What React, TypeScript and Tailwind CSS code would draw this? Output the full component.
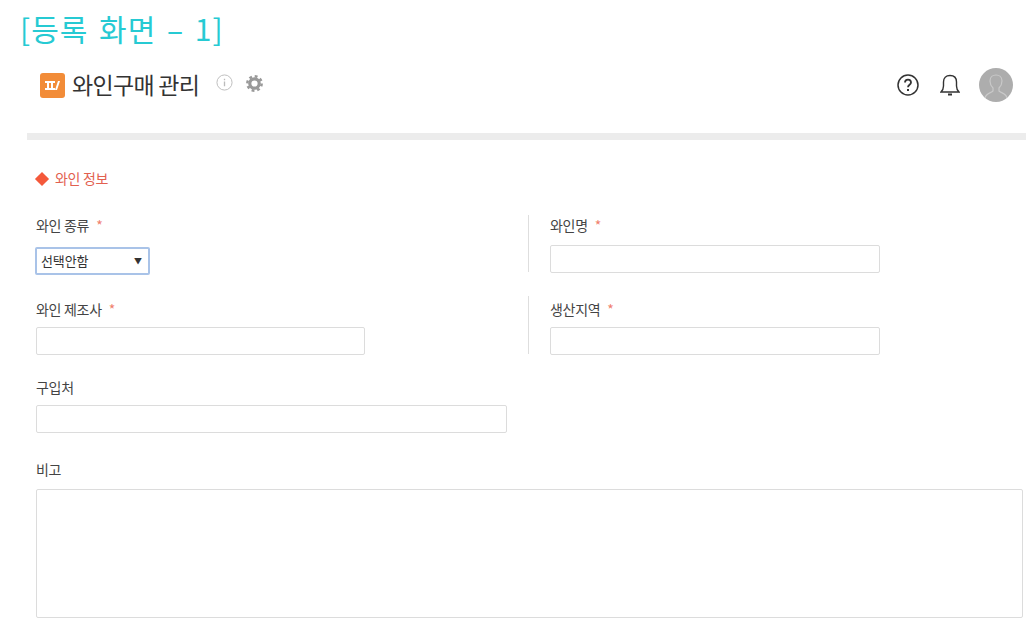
const font = { fontFamily: '"Noto Sans CJK KR", "Noto Sans", sans-serif' };

function Label({ text, required }: { text: string; required?: boolean }) {
  return (
    <div className="h-[20px] text-[14px] leading-[18px] tracking-[-0.3px] text-[#444]">
      {text}
      {required && <span className="ml-[7px] text-[#f0806c]">*</span>}
    </div>
  );
}

function Input({ width }: { width: string }) {
  return <input className={`block h-[28px] rounded-[2px] border border-[#dcdcdc] bg-white ${width}`} />;
}

export default function App() {
  return (
    <div className="h-[624px] w-[1026px] overflow-hidden bg-white" style={font}>
      <div className="h-[47px] pl-[20px] pt-[8px] text-[30px] leading-[40px] font-normal tracking-[1px] [word-spacing:3px] text-[#26cad3]">
        [등록 화면 – 1]
      </div>

      <div className="flex h-[86px] items-start justify-between pl-[40px] pr-[13px]">
        <div className="flex items-center pt-[23px]">
          <div className="flex h-[25px] w-[25px] items-center justify-center rounded-[3px] bg-[#f28c38]">
            <svg width="15" height="9" viewBox="0 0 15 9" fill="#fff">
              <path d="M0 0h10v2H8v5h2v2H0V7h2V2H0zM4 2v5h2V2z" />
              <path d="M13 0h2l-3 9h-2z" />
            </svg>
          </div>
          <div className="ml-[7px] pb-[2px] text-[23px] leading-[28px] tracking-[-0.7px] text-[#333]">와인구매 관리</div>
          <svg className="ml-[17px] -mt-[5px]" width="17" height="17" viewBox="0 0 18 18" fill="none" stroke="#bbb">
            <circle cx="9" cy="9" r="8" />
            <path d="M9 8v5M9 5v1.6" strokeWidth="1.4" />
          </svg>
          <svg className="ml-[13px] -mt-[3px]" width="17" height="17" viewBox="0 0 18 18" fill="none" stroke="#999">
            <circle cx="9" cy="9" r="5" strokeWidth="3.4" />
            <circle cx="9" cy="9" r="7.6" strokeWidth="2.6" strokeDasharray="3 2.97" />
          </svg>
        </div>
        <div className="flex items-center pt-[21px]">
          <svg width="22" height="22" viewBox="0 0 22 22" fill="none" stroke="#333" strokeWidth="1.5">
            <circle cx="11" cy="11" r="10" />
            <path d="M8 8.600c0-4 6-4 6 0 0 2.200-3 2.200-3 4.600" strokeWidth="1.8" />
            <path d="M11 15v2" strokeWidth="2" />
          </svg>
          <svg className="ml-[21px]" width="20" height="24" viewBox="0 0 20 24" fill="none" stroke="#333" strokeWidth="1.4">
            <path d="M1 19c2-2 2.500-3 2.500-6V9c0-4 2.500-6.500 6.500-6.500S16.500 5 16.500 9v4c0 3 .5 4 2.500 6z" />
            <path d="M8 21.500h4" strokeWidth="2" />
          </svg>
          <div className="ml-[19px] flex h-[34px] w-[34px] items-center justify-center overflow-hidden rounded-full bg-[#adadad]">
            <svg width="34" height="34" viewBox="0 0 34 34" fill="none" stroke="#c9c9c9" strokeWidth="1.2">
              <path d="M6 30c1-5 6-5 8-7v-3c-2-2-3-4-3-7 0-4 3-6 6-6s6 2 6 6c0 3-1 5-3 7v3c2 2 7 2 8 7" />
            </svg>
          </div>
        </div>
      </div>

      <div className="ml-[27px] h-[7px] bg-[#ececec]" />

      <div className="pl-[36px]">
        <div className="mt-[28px] flex h-[22px] items-center text-[14px] tracking-[-0.3px] text-[#e2604f]">
          <span className="ml-[1px] mr-[8px] h-[10px] w-[10px] rotate-45 bg-[#f4593b]" />
          <span className="pb-[2px]">와인 정보</span>
        </div>

        <div className="mt-[26px] flex">
          <div className="w-[492px]">
            <Label text="와인 종류" required />
            <div className="mt-[11px] -ml-[1px] flex h-[28px] w-[115px] items-center justify-between rounded-[2px] border-2 border-[#a9c3e8] pl-[4px] pr-[6px] text-[13px] tracking-[-0.1px] text-[#333]">
              <span>선택안함</span>
              <span className="text-[8px]">▼</span>
            </div>
          </div>
          <div className="-mt-[1px] h-[57px] w-[1px] bg-[#dedede]" />
          <div className="ml-[21px]">
            <Label text="와인명" required />
            <div className="mt-[9px]">
              <Input width="w-[330px]" />
            </div>
          </div>
        </div>

        <div className="mt-[25px] flex">
          <div className="w-[492px]">
            <Label text="와인 제조사" required />
            <div className="mt-[7px]">
              <Input width="w-[329px]" />
            </div>
          </div>
          <div className="-mt-[4px] h-[58px] w-[1px] bg-[#dedede]" />
          <div className="ml-[21px]">
            <Label text="생산지역" required />
            <div className="mt-[7px]">
              <Input width="w-[330px]" />
            </div>
          </div>
        </div>

        <div className="mt-[23px]">
          <Label text="구입처" />
          <div className="mt-[7px]">
            <Input width="w-[471px]" />
          </div>
        </div>

        <div className="mt-[27px]">
          <Label text="비고" />
          <div className="mt-[9px] h-[129px] w-[987px] rounded-[2px] border border-[#dcdcdc]" />
        </div>
      </div>
    </div>
  );
}
